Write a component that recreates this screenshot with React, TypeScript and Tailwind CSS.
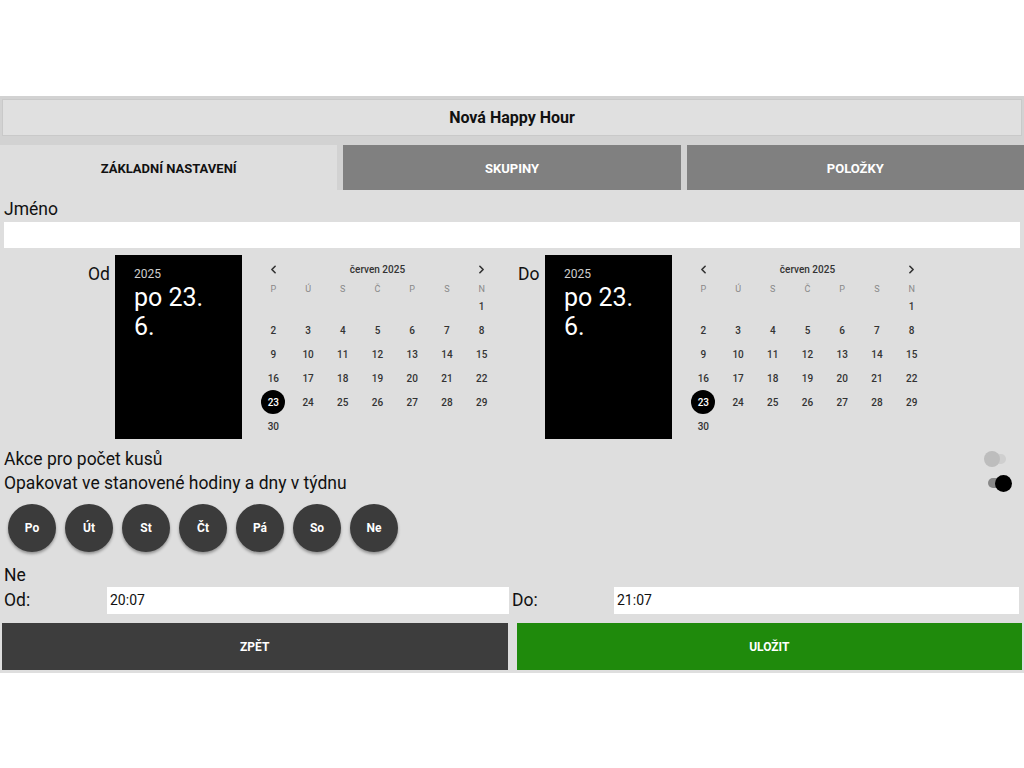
import React from 'react';
import { ChevronLeft, ChevronRight } from 'lucide-react';

const weekdays = ['P', 'Ú', 'S', 'Č', 'P', 'S', 'N'];
const days: (number | null)[] = [
  null, null, null, null, null, null, 1,
  2, 3, 4, 5, 6, 7, 8,
  9, 10, 11, 12, 13, 14, 15,
  16, 17, 18, 19, 20, 21, 22,
  23, 24, 25, 26, 27, 28, 29,
  30,
];
const weekButtons = ['Po', 'Út', 'St', 'Čt', 'Pá', 'So', 'Ne'];

function Calendar() {
  return (
    <div className="w-[243px]">
      <div className="grid grid-cols-7 h-[28px] items-center text-[#333]">
        <div className="flex justify-center">
          <ChevronLeft size={13} strokeWidth={3} />
        </div>
        <div className="col-span-5 text-center text-[10px] font-medium">červen 2025</div>
        <div className="flex justify-center">
          <ChevronRight size={13} strokeWidth={3} />
        </div>
      </div>
      <div className="grid grid-cols-7 h-[11px] items-center text-[9px] text-[#888]">
        {weekdays.map((d, i) => (
          <div key={i} className="text-center">{d}</div>
        ))}
      </div>
      <div className="grid grid-cols-7 auto-rows-[24px] text-[10px] font-medium text-[#333]">
        {days.map((d, i) => (
          <div key={i} className="flex items-center justify-center">
            {d === 23 ? (
              <span className="w-[24px] h-[24px] rounded-full bg-black text-white flex items-center justify-center">23</span>
            ) : (
              d
            )}
          </div>
        ))}
      </div>
    </div>
  );
}

function DateBox() {
  return (
    <div className="w-[127px] h-[184px] bg-black text-white pl-[19px] pt-[11px]">
      <div className="text-[12px] text-[#cfcfcf] leading-[16px]">2025</div>
      <div className="text-[25px] leading-[29px] mt-[1px]">po 23.<br />6.</div>
    </div>
  );
}

export default function App() {
  return (
    <div className="w-[1024px] h-[768px] bg-white font-['Roboto',sans-serif] text-[#111] pt-[96px]">
      <div className="h-[577px] bg-[#d2d2d2] flex flex-col">
        <div className="mx-[2px] mt-[3px] h-[37px] bg-[#e0e0e0] border border-[#c9c9c9] flex items-center justify-center text-[16px] font-bold">
          Nová Happy Hour
        </div>
        <div className="mt-[9px] h-[45px] flex gap-[6px]">
          <div className="flex-1 bg-[#dedede] flex items-center justify-center text-[13px] font-bold pt-[2px]">ZÁKLADNÍ NASTAVENÍ</div>
          <div className="flex-1 bg-[#808080] flex items-center justify-center text-[13px] font-bold text-white pt-[2px]">SKUPINY</div>
          <div className="flex-1 bg-[#808080] flex items-center justify-center text-[13px] font-bold text-white pt-[2px]">POLOŽKY</div>
        </div>
        <div className="flex-1 bg-[#dedede] flex flex-col text-[17.5px]">
          <div className="pl-[4px] pt-[9px] h-[32px] leading-[20px]">Jméno</div>
          <div className="mx-[4px] h-[26px] bg-white" />
          <div className="mt-[7px] flex h-[184px]">
            <div className="w-[512px] flex">
              <div className="w-[115px] pr-[5px] text-right pt-[6px]">Od</div>
              <DateBox />
              <div className="ml-[14px]">
                <Calendar />
              </div>
            </div>
            <div className="w-[512px] flex">
              <div className="w-[33px] pl-[6px] pt-[6px]">Do</div>
              <DateBox />
              <div className="ml-[14px]">
                <Calendar />
              </div>
            </div>
          </div>
          <div className="mt-[8px] h-[24px] pl-[4px] pr-[18px] flex items-center justify-between">
            <span>Akce pro počet kusů</span>
            <span className="relative w-[22px] h-[16px] flex items-center">
              <span className="absolute left-[4px] w-[18px] h-[10px] rounded-full bg-[#cfcfcf]" />
              <span className="absolute left-0 w-[16px] h-[16px] rounded-full bg-[#bdbdbd]" />
            </span>
          </div>
          <div className="h-[24px] pl-[4px] pr-[12px] flex items-center justify-between">
            <span>Opakovat ve stanovené hodiny a dny v týdnu</span>
            <span className="relative w-[24px] h-[18px] flex items-center">
              <span className="absolute left-0 w-[18px] h-[10px] rounded-full bg-[#888]" />
              <span className="absolute right-0 w-[17px] h-[17px] rounded-full bg-black" />
            </span>
          </div>
          <div className="mt-[9px] pl-[8px] flex gap-[9px]">
            {weekButtons.map((d) => (
              <div key={d} className="w-[48px] h-[48px] rounded-full bg-[#3b3b3b] shadow-[0_2px_3px_rgba(0,0,0,0.35)] flex items-center justify-center text-white text-[12px] font-bold">
                {d}
              </div>
            ))}
          </div>
          <div className="mt-[11px] pl-[4px] h-[24px] flex items-center">Ne</div>
          <div className="h-[27px] flex items-center">
            <div className="w-[512px] flex items-center">
              <span className="w-[107px] pl-[4px]">Od:</span>
              <div className="w-[402px] h-[27px] bg-white flex items-center pl-[3px] text-[14px]">20:07</div>
            </div>
            <div className="w-[512px] flex items-center">
              <span className="w-[102px]">Do:</span>
              <div className="w-[405px] h-[27px] bg-white flex items-center pl-[3px] text-[14px]">21:07</div>
            </div>
          </div>
          <div className="mt-[9px] h-[47px] flex gap-[9px] px-[2px]">
            <div className="flex-1 bg-[#3d3d3d] flex items-center justify-center text-white text-[12px] font-bold">ZPĚT</div>
            <div className="flex-1 bg-[#1f8a0c] flex items-center justify-center text-white text-[12px] font-bold">ULOŽIT</div>
          </div>
        </div>
      </div>
    </div>
  );
}
